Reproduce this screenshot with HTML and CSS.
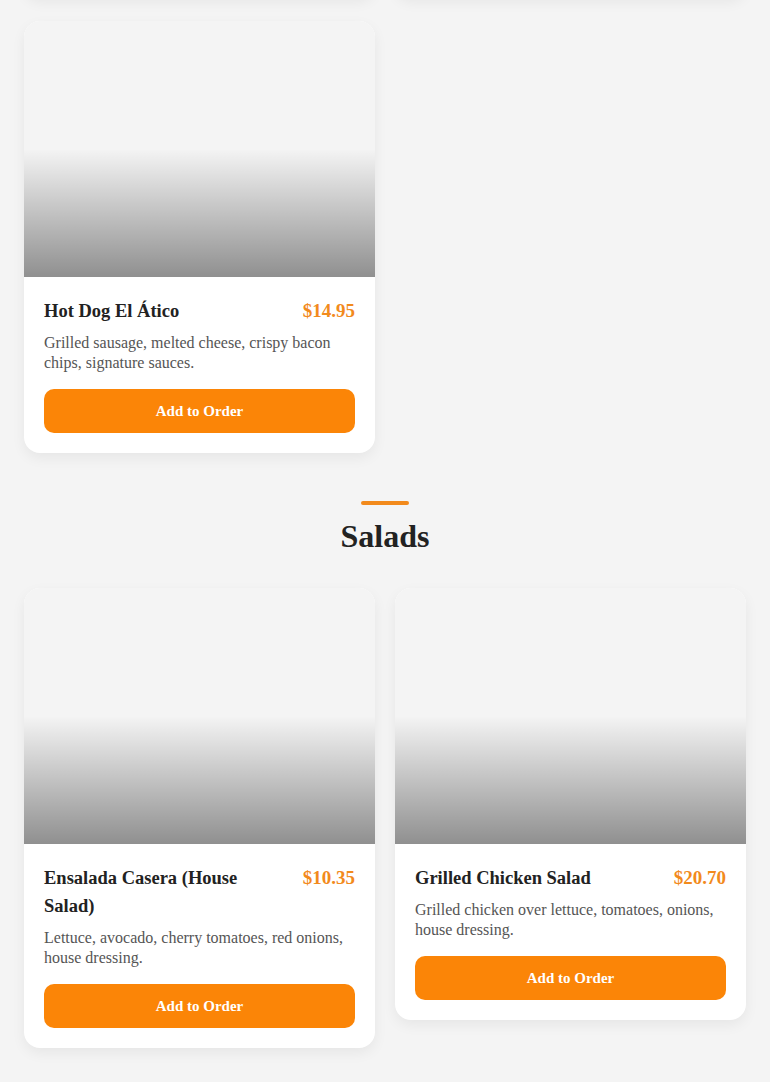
FILE: index.html
```html
<!DOCTYPE html>
<html lang="en">
<head>
<meta charset="utf-8">
<title>Menu</title>
<link rel="stylesheet" href="styles.css">
</head>
<body>
<main class="menu">
  <div class="grid grid-prev">
    <div class="card card-prev"></div>
    <div class="card card-prev"></div>
  </div>

  <div class="grid">
    <article class="card">
      <div class="card-img"></div>
      <div class="card-body">
        <div class="card-head">
          <h3 class="card-title">Hot Dog El Ático</h3>
          <span class="card-price">$14.95</span>
        </div>
        <p class="card-desc">Grilled sausage, melted cheese, crispy bacon chips, signature sauces.</p>
        <button class="btn">Add to Order</button>
      </div>
    </article>
  </div>

  <section class="section">
    <div class="section-bar"></div>
    <h2 class="section-title">Salads</h2>
    <div class="grid">
      <article class="card">
        <div class="card-img"></div>
        <div class="card-body">
          <div class="card-head">
            <h3 class="card-title">Ensalada Casera (House Salad)</h3>
            <span class="card-price">$10.35</span>
          </div>
          <p class="card-desc">Lettuce, avocado, cherry tomatoes, red onions, house dressing.</p>
          <button class="btn">Add to Order</button>
        </div>
      </article>
      <article class="card">
        <div class="card-img"></div>
        <div class="card-body">
          <div class="card-head">
            <h3 class="card-title">Grilled Chicken Salad</h3>
            <span class="card-price">$20.70</span>
          </div>
          <p class="card-desc">Grilled chicken over lettuce, tomatoes, onions, house dressing.</p>
          <button class="btn">Add to Order</button>
        </div>
      </article>
    </div>
  </section>
</main>
</body>
</html>
```

FILE: styles.css
```css
* { box-sizing: border-box; }

body {
  margin: 0;
  background: #f4f4f4;
  font-family: "Liberation Serif", "Times New Roman", serif;
  color: #222;
}

.menu {
  padding: 0 24px 40px;
}

.grid {
  display: grid;
  grid-template-columns: 1fr 1fr;
  gap: 20px;
  align-items: start;
}

.grid-prev {
  margin-top: -203px;
  margin-bottom: 24px;
}

.card-prev {
  height: 200px;
}

.card {
  background: #fff;
  border-radius: 16px;
  overflow: hidden;
  box-shadow: 0 5px 14px rgba(0, 0, 0, 0.06);
}

.card-img {
  height: 256px;
  background: linear-gradient(to bottom, rgba(0,0,0,0) 50%, rgba(0,0,0,0.41) 100%), #f4f4f4;
}

.card-body {
  padding: 20px;
}

.card-head {
  display: flex;
  justify-content: space-between;
  align-items: flex-start;
  gap: 24px;
}

.card-title {
  margin: 0;
  font-size: 18.5px;
  line-height: 28px;
  font-weight: 700;
  color: #222;
}

.card-price {
  font-size: 19px;
  line-height: 28px;
  font-weight: 700;
  color: #f28a1c;
  white-space: nowrap;
}

.card-desc {
  margin: 8px 0 16px;
  font-size: 16px;
  line-height: 20px;
  color: #555;
}

.btn {
  display: block;
  width: 100%;
  height: 44px;
  border: 0;
  border-radius: 10px;
  background: #fb8507;
  color: #fff;
  font-family: inherit;
  font-size: 15px;
  font-weight: 700;
  cursor: pointer;
}

.section {
  padding-top: 48px;
  display: flex;
  flex-direction: column;
  align-items: center;
}

.section > .grid {
  align-self: stretch;
}

.section-bar {
  width: 48px;
  height: 4px;
  border-radius: 2px;
  background: #f28a1c;
  margin-bottom: 12px;
}

.section-title {
  margin: 0 0 33px;
  font-size: 32px;
  line-height: 38px;
  font-weight: 700;
  color: #222;
}
```
